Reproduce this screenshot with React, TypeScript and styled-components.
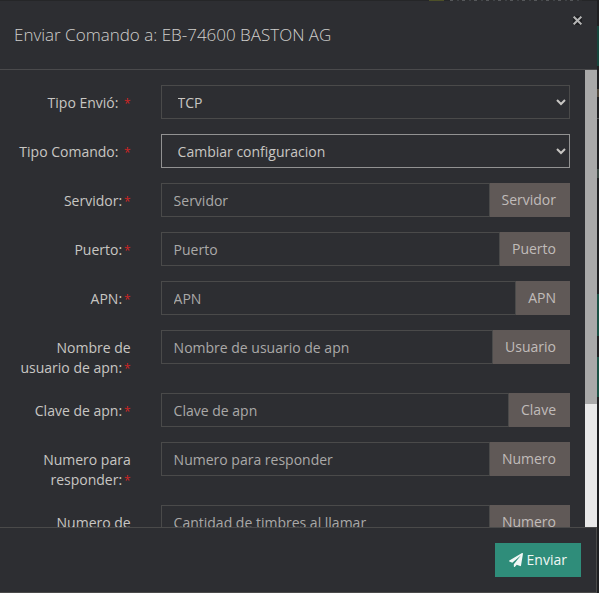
import React from "react";
import styled, { createGlobalStyle } from "styled-components";
import { FaPaperPlane } from "react-icons/fa";

const GlobalStyle = createGlobalStyle`
  *, *::before, *::after { box-sizing: border-box; }
  body {
    margin: 0;
    overflow: hidden;
    background: #1f2022;
    font-family: "Open Sans", "Liberation Sans", sans-serif;
    font-size: 14px;
    line-height: 20px;
    color: #c8c6c3;
  }
`;

const Page = styled.div`
  display: grid;
  grid-template-columns: 597px 2px;
  width: 599px;
  height: 593px;
`;

const Backdrop = styled.div`
  background: linear-gradient(
    to bottom,
    #1f2022 0 26px, #17463d 26px 66px, #1f2022 66px 89px,
    #51493e 89px 97px, #1f2022 97px 118px, #4c4d4e 118px 119px,
    #1f2022 119px 169px, #3c4843 169px 178px, #1f2022 178px 294px,
    #1b5145 294px 336px, #1f2022 336px 357px, #1b5145 357px 397px,
    #1f2022 397px
  );
`;

const Modal = styled.section`
  display: flex;
  flex-direction: column;
  height: 593px;
  background: #2d2e32;
  border-bottom: 1px solid #4a4a4a;
`;

const BackdropEdge = styled.div`
  height: 1px;
  flex: none;
  background:
    linear-gradient(#4d5028, #4d5028) 429px 0 / 15px 1px no-repeat,
    repeating-linear-gradient(to right, #55575a 0 3px, #2b2c2e 3px 7px, #404347 7px 9px, #2b2c2e 9px 12px) 450px 0 / 132px 1px no-repeat,
    #252628;
`;

const Header = styled.header`
  display: flex;
  justify-content: space-between;
  align-items: flex-start;
  flex: none;
  height: 69px;
  padding: 14px 15px 0 14px;
  border-bottom: 1px solid #4a4a4c;
`;

const Title = styled.h4`
  margin: 7px 0 0;
  font-size: 17px;
  font-weight: 300;
  line-height: 26px;
  white-space: nowrap;
  color: #d0cecc;
`;

const CloseButton = styled.button`
  display: flex;
  margin: 1px 0 0;
  padding: 0;
  border: 0;
  background: #1d1e21;
  color: #b4b4b4;
`;

const Body = styled.div`
  display: flex;
  flex: none;
  height: 457px;
  overflow: hidden;
`;

const Form = styled.form`
  display: flex;
  flex-direction: column;
  gap: 15px;
  width: 585px;
  padding: 15px 15px 0 1px;
`;

const Row = styled.div`
  display: grid;
  grid-template-columns: 130px 409px;
  column-gap: 30px;
  flex: none;
`;

const Label = styled.label`
  padding: 8px 0.3px 0 14px;
  text-align: right;
`;

const Required = styled.span`
  padding-left: 2px;
  font-size: 12px;
  line-height: 12px;
  color: #cf2525;
`;

const Select = styled.select<{ $focused?: boolean }>`
  width: 408.6px;
  height: 34px;
  padding: 6px 1px 6px 11.6px;
  border: 1px solid ${(p) => (p.$focused ? "#929292" : "#4a4a4a")};
  border-radius: 0;
  outline: 0;
  background: #2d2e32;
  color: #c8c6c3;
  font: inherit;
`;

const InputGroup = styled.div`
  display: flex;
  height: 34px;
`;

const Input = styled.input`
  flex: 1;
  min-width: 0;
  height: 34px;
  padding: 6px 11.6px;
  border: 1px solid #4a4a4a;
  border-radius: 0;
  outline: 0;
  background: #2d2e32;
  color: #c8c6c3;
  font: inherit;

  &::placeholder {
    color: #aaa9a8;
    opacity: 1;
  }
`;

const Addon = styled.span`
  flex: none;
  padding: 7px 14px 7px 11.7px;
  background: #605957;
  color: #c0bcba;
`;

const ScrollTrack = styled.div`
  width: 12px;
  background: #e9e9e9;
`;

const ScrollThumb = styled.div`
  height: 334px;
  background: #a9a9a9;
`;

const Footer = styled.footer`
  display: flex;
  justify-content: flex-end;
  align-items: flex-start;
  flex: 1;
  padding: 15px 15px 0;
  border-top: 1px solid #4a4a4a;
  border-right: 1px solid #4a4a4a;
`;

const SubmitButton = styled.button`
  display: flex;
  align-items: center;
  gap: 4px;
  height: 34px;
  padding: 0 14px;
  border: 0;
  background: #2f8d7a;
  color: #f1f7f5;
  font: inherit;
`;

const fields = [
  { label: "Servidor:", placeholder: "Servidor", addon: "Servidor" },
  { label: "Puerto:", placeholder: "Puerto", addon: "Puerto" },
  { label: "APN:", placeholder: "APN", addon: "APN" },
  { label: "Nombre de usuario de apn:", placeholder: "Nombre de usuario de apn", addon: "Usuario" },
  { label: "Clave de apn:", placeholder: "Clave de apn", addon: "Clave" },
  { label: "Numero para responder:", placeholder: "Numero para responder", addon: "Numero" },
  { label: "Numero de timbres:", placeholder: "Cantidad de timbres al llamar", addon: "Numero" },
];

export default function App() {
  return (
    <>
      <GlobalStyle />
      <Page>
        <Modal>
          <BackdropEdge />
          <Header>
            <Title>Enviar Comando a: EB-74600 BASTON AG</Title>
            <CloseButton aria-label="Cerrar">
              <svg width="9" height="9" viewBox="0 0 9 9" stroke="currentColor" strokeWidth="2">
                <path d="M.6.6 8.4 8.4M8.4.6.6 8.4" />
              </svg>
            </CloseButton>
          </Header>
          <Body>
            <Form>
              <Row>
                <Label>Tipo Envió: <Required>*</Required></Label>
                <Select><option>TCP</option></Select>
              </Row>
              <Row>
                <Label>Tipo Comando: <Required>*</Required></Label>
                <Select $focused><option>Cambiar configuracion</option></Select>
              </Row>
              {fields.map((f) => (
                <Row key={f.label}>
                  <Label>{f.label}<Required>*</Required></Label>
                  <InputGroup>
                    <Input placeholder={f.placeholder} />
                    <Addon>{f.addon}</Addon>
                  </InputGroup>
                </Row>
              ))}
            </Form>
            <ScrollTrack><ScrollThumb /></ScrollTrack>
          </Body>
          <Footer>
            <SubmitButton type="button"><FaPaperPlane size={14} />Enviar</SubmitButton>
          </Footer>
        </Modal>
        <Backdrop />
      </Page>
    </>
  );
}
